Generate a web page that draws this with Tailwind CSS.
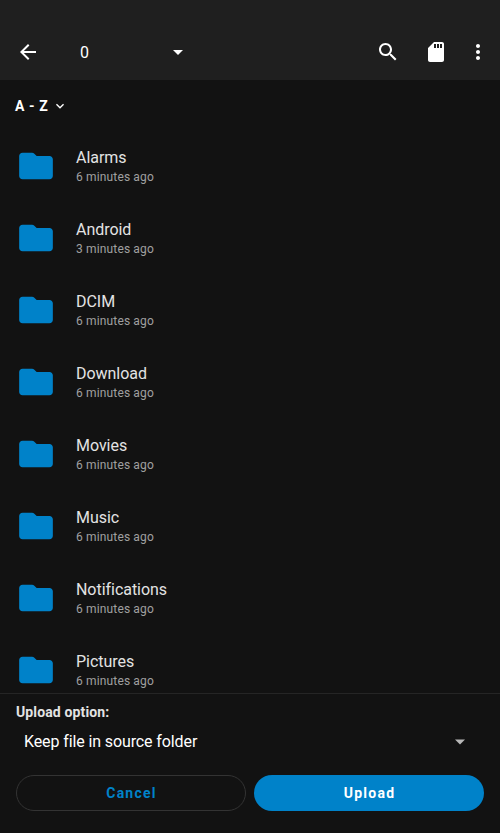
<!DOCTYPE html>
<html lang="en">
<head>
<meta charset="utf-8">
<title>Upload files</title>
<script src="https://cdn.jsdelivr.net/npm/@tailwindcss/browser@4"></script>
</head>
<body class="bg-[#121212]">
<div class="w-[500px] h-[833px] flex flex-col overflow-hidden bg-[#121212] font-[Roboto,sans-serif] text-[#e3e3e3]">
  <div class="h-6 shrink-0 bg-[#1f1f1f]"></div>
  <header class="h-14 shrink-0 bg-[#1f1f1f] flex items-center pl-4 pr-2.5 text-white">
    <svg class="size-6" viewBox="0 0 24 24" fill="currentColor"><path d="M20 11H7.83l5.59-5.59L12 4l-8 8 8 8 1.41-1.41L7.83 13H20v-2z"/></svg>
    <span class="ml-10 w-[86px] pt-0.5 text-base">0</span>
    <svg class="size-6" viewBox="0 0 24 24" fill="currentColor"><path d="M7 10h10l-5 5z"/></svg>
    <div class="ml-auto flex items-center">
      <svg class="size-6" viewBox="0 0 24 24" fill="currentColor"><path d="M15.5 14h-.79l-.28-.27C15.41 12.59 16 11.11 16 9.5 16 5.91 13.09 3 9.5 3S3 5.91 3 9.5 5.91 16 9.5 16c1.61 0 3.09-.59 4.23-1.57l.27.28v.79l5 4.99L20.49 19l-4.99-5zm-6 0C7.01 14 5 11.99 5 9.5S7.01 5 9.5 5 14 7.01 14 9.5 11.99 14 9.5 14z"/></svg>
      <svg class="size-6 ml-6" viewBox="0 0 24 24" fill="currentColor"><path d="M18 2h-8L4 8v12c0 1.1.9 2 2 2h12c1.1 0 2-.9 2-2V4c0-1.1-.9-2-2-2zm-6 6h-2V4h2v4zm3 0h-2V4h2v4zm3 0h-2V4h2v4z"/></svg>
      <svg class="size-6 ml-[18px]" viewBox="0 0 24 24" fill="currentColor"><path d="M12 8c1.1 0 2-.9 2-2s-.9-2-2-2-2 .9-2 2 .9 2 2 2zm0 2c-1.1 0-2 .9-2 2s.9 2 2 2 2-.9 2-2-.9-2-2-2zm0 6c-1.1 0-2 .9-2 2s.9 2 2 2 2-.9 2-2-.9-2-2-2z"/></svg>
    </div>
  </header>
  <div class="h-[50px] shrink-0 flex items-center pl-[15px] pt-0.5 text-sm font-bold tracking-[0.6px] text-white">
    <span>A - Z</span>
    <svg class="size-4 ml-1" viewBox="0 0 24 24" fill="currentColor"><path d="M7.41 8.59L12 13.17l4.59-4.58L18 10l-6 6-6-6 1.41-1.41z"/></svg>
  </div>
  <main id="files" class="flex-1 min-h-0 overflow-hidden"></main>
  <footer class="h-[140px] shrink-0 border-t border-[#252525] px-4">
    <div class="pt-2 h-[29px] text-sm leading-5 font-bold tracking-[0.13px]">Upload option:</div>
    <div class="h-[38px] flex items-center justify-between pl-2 pr-3 text-base tracking-[-0.11px] text-white">
      <span>Keep file in source folder</span>
      <svg class="size-6 text-[#b8b8b8]" viewBox="0 0 24 24" fill="currentColor"><path d="M7 9.5h10l-5 5z"/></svg>
    </div>
    <div class="mt-3.5 grid grid-cols-2 gap-2 text-sm font-bold tracking-[1.25px]">
      <button class="h-9 pl-px rounded-full border border-[#333333] text-[#0082c9]">Cancel</button>
      <button class="h-9 pl-px rounded-full bg-[#0082c9] text-white">Upload</button>
    </div>
  </footer>
</div>
<template id="row">
  <div class="h-[72px] flex items-center pl-4">
    <svg class="size-10" viewBox="0 0 24 24" fill="#0082c9"><path d="M3.9 4C2.8 4 1.9 4.9 1.9 6V18c0 1.1.9 2 2 2h16.2c1.1 0 2-.9 2-2V8c0-1.1-.9-2-2-2H12.4L11 4.6C10.6 4.2 10.2 4 9.6 4z"/></svg>
    <div class="ml-5">
      <div class="name text-base leading-[19px] tracking-[-0.04px]"></div>
      <div class="time text-xs leading-[14px] mt-[3px] mb-px tracking-[0.15px] text-[#a0a0a0]"></div>
    </div>
  </div>
</template>
<script>
[["Alarms",6],["Android",3],["DCIM",6],["Download",6],["Movies",6],["Music",6],["Notifications",6],["Pictures",6]].forEach(([name,min])=>{
  const n=document.getElementById("row").content.cloneNode(true);
  n.querySelector(".name").textContent=name;
  n.querySelector(".time").textContent=min+" minutes ago";
  document.getElementById("files").append(n);
});
</script>
</body>
</html>
